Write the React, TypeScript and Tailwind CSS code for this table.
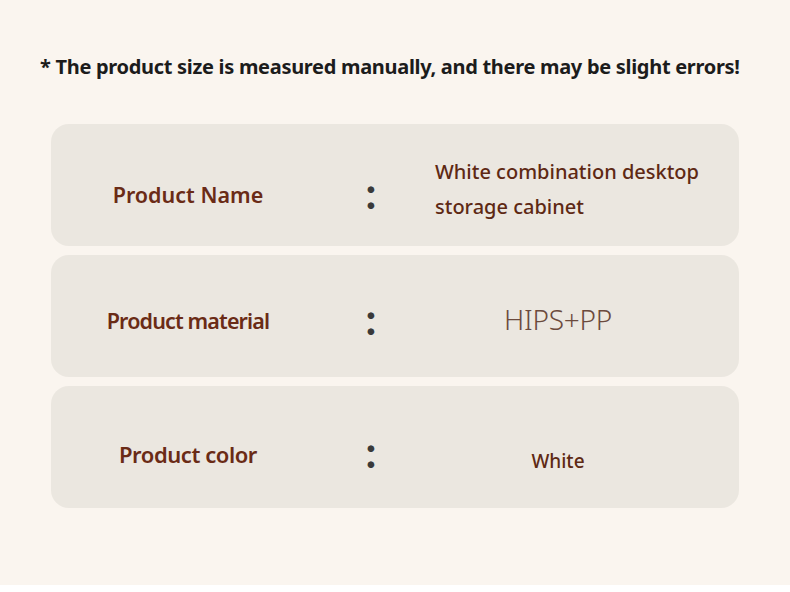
const rows = [
  { label: "Product Name", labelClass: "text-[21.5px] font-semibold", kind: "name", pad: "pt-[20px]" },
  { label: "Product material", labelClass: "text-[21.5px] font-semibold tracking-[-0.04em]", kind: "material", pad: "pt-[10px]" },
  { label: "Product color", labelClass: "text-[22px] font-semibold tracking-[-0.02em]", kind: "color", pad: "pt-[14px]" },
];

function Value({ kind }: { kind: string }) {
  if (kind === "name") {
    return (
      <div className="pl-[18px] text-left text-[20px] font-medium leading-[35px] text-[#5e2914] -mt-[12px]">
        <div>White combination desktop</div>
        <div>storage cabinet</div>
      </div>
    );
  }
  if (kind === "material") {
    return <div className="text-center text-[28px] font-light tracking-[-0.01em] text-[#6b4a3d] -mt-[4px]">HIPS+PP</div>;
  }
  return <div className="text-center text-[19px] font-medium text-[#5e2914] mt-[15px]">White</div>;
}

export default function App() {
  return (
    <div className="w-[790px] h-[585px] bg-[#faf5ef] pt-[52px] font-['Noto_Sans',sans-serif]">
      <h1 className="pl-[40px] text-[20px] font-bold leading-[30px] tracking-[-0.015em] text-[#1c1c1c]">
        * The product size is measured manually, and there may be slight errors!
      </h1>
      <div className="mt-[42px] ml-[51px] w-[688px] flex flex-col gap-[9px]">
        {rows.map((r) => (
          <div
            key={r.label}
            className={"h-[122px] rounded-[18px] bg-[#ebe7e0] grid grid-cols-[274px_92px_282px] items-center " + r.pad}
          >
            <div className={"text-center text-[#6a2b16] " + r.labelClass}>{r.label}</div>
            <div className="text-center font-['Lato',sans-serif] font-bold text-[44px] leading-none text-[#3a3a3a] -mt-[6px]">:</div>
            <Value kind={r.kind} />
          </div>
        ))}
      </div>
    </div>
  );
}
